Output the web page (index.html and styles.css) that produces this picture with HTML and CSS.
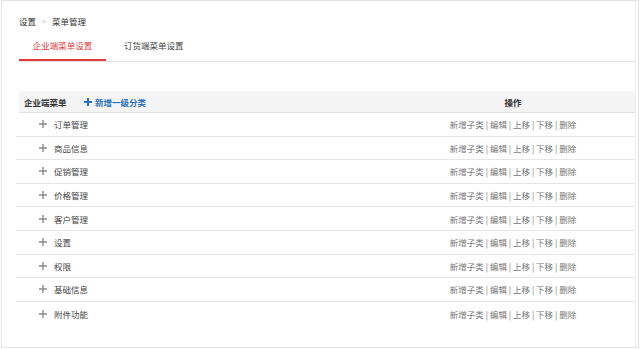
FILE: index.html
```html
<!DOCTYPE html>
<html lang="zh-CN">
<head>
<meta charset="utf-8">
<link rel="stylesheet" href="styles.css">
</head>
<body>
<div class="frame">
  <div class="inner">
    <div class="crumb"><span>设置</span><span class="sep">&gt;</span><span>菜单管理</span></div>
    <div class="tabs">
      <div class="tab active">企业端菜单设置</div>
      <div class="tab">订货端菜单设置</div>
    </div>
    <div class="table">
      <div class="thead">
        <div class="c-name"><span class="th-title">企业端菜单</span><span class="add"><svg width="8" height="8" viewBox="0 0 8 8"><path d="M4 0v8M0 4h8" stroke="#2a72bd" stroke-width="2"/></svg>新增一级分类</span></div>
        <div class="c-op">操作</div>
      </div>
      <div class="row"><div class="c-name"><svg class="plus" width="8" height="8" viewBox="0 0 8 8"><path d="M4 0v8M0 4h8" stroke="#8a8a8a" stroke-width="1.4"/></svg>订单管理</div><div class="c-op ops">新增子类 | 编辑 | 上移 | 下移 | 删除</div></div>
      <div class="row"><div class="c-name"><svg class="plus" width="8" height="8" viewBox="0 0 8 8"><path d="M4 0v8M0 4h8" stroke="#8a8a8a" stroke-width="1.4"/></svg>商品信息</div><div class="c-op ops">新增子类 | 编辑 | 上移 | 下移 | 删除</div></div>
      <div class="row"><div class="c-name"><svg class="plus" width="8" height="8" viewBox="0 0 8 8"><path d="M4 0v8M0 4h8" stroke="#8a8a8a" stroke-width="1.4"/></svg>促销管理</div><div class="c-op ops">新增子类 | 编辑 | 上移 | 下移 | 删除</div></div>
      <div class="row"><div class="c-name"><svg class="plus" width="8" height="8" viewBox="0 0 8 8"><path d="M4 0v8M0 4h8" stroke="#8a8a8a" stroke-width="1.4"/></svg>价格管理</div><div class="c-op ops">新增子类 | 编辑 | 上移 | 下移 | 删除</div></div>
      <div class="row"><div class="c-name"><svg class="plus" width="8" height="8" viewBox="0 0 8 8"><path d="M4 0v8M0 4h8" stroke="#8a8a8a" stroke-width="1.4"/></svg>客户管理</div><div class="c-op ops">新增子类 | 编辑 | 上移 | 下移 | 删除</div></div>
      <div class="row"><div class="c-name"><svg class="plus" width="8" height="8" viewBox="0 0 8 8"><path d="M4 0v8M0 4h8" stroke="#8a8a8a" stroke-width="1.4"/></svg>设置</div><div class="c-op ops">新增子类 | 编辑 | 上移 | 下移 | 删除</div></div>
      <div class="row"><div class="c-name"><svg class="plus" width="8" height="8" viewBox="0 0 8 8"><path d="M4 0v8M0 4h8" stroke="#8a8a8a" stroke-width="1.4"/></svg>权限</div><div class="c-op ops">新增子类 | 编辑 | 上移 | 下移 | 删除</div></div>
      <div class="row"><div class="c-name"><svg class="plus" width="8" height="8" viewBox="0 0 8 8"><path d="M4 0v8M0 4h8" stroke="#8a8a8a" stroke-width="1.4"/></svg>基础信息</div><div class="c-op ops">新增子类 | 编辑 | 上移 | 下移 | 删除</div></div>
      <div class="row last"><div class="c-name"><svg class="plus" width="8" height="8" viewBox="0 0 8 8"><path d="M4 0v8M0 4h8" stroke="#8a8a8a" stroke-width="1.4"/></svg>附件功能</div><div class="c-op ops">新增子类 | 编辑 | 上移 | 下移 | 删除</div></div>
    </div>
  </div>
</div>
</body>
</html>
```

FILE: styles.css
```css
* { box-sizing: border-box; }
html, body { margin: 0; padding: 0; background: #fff; }
body {
  font-family: "Noto Sans CJK SC", "Noto Sans", sans-serif;
  font-size: 8.5px;
  color: #333;
  width: 640px;
  height: 349px;
  overflow: hidden;
}
.frame {
  margin-left: 1px;
  width: 638px;
  height: 348px;
  border: 1px solid #e3e3e3;
}
.inner {
  width: 634px;
  height: 100%;
  border-right: 1px solid #ececec;
  padding-top: 12px;
}
.crumb {
  display: flex;
  align-items: center;
  gap: 6px;
  padding-left: 17px;
  height: 16px;
  line-height: 16px;
  color: #333;
}
.crumb .sep { color: #bbb; font-size: 7px; }
.tabs {
  display: flex;
  margin-top: 7px;
  margin-left: 17px;
  margin-right: -1px;
  border-bottom: 1px solid #e2e2e2;
}
.tab {
  height: 25px;
  line-height: 19px;
  width: 87px;
  text-align: center;
  color: #444;
  white-space: nowrap;
}
.tab + .tab { margin-left: 18px; width: auto; text-align: left; }
.tab.active {
  color: #e03a3a;
  border-bottom: 2px solid #e03a3a;
  margin-bottom: -1px;
}
.table { margin-top: 29px; margin-left: 14px; }
.thead {
  display: flex;
  align-items: center;
  height: 22px;
  margin-left: 3px;
  background: #f4f4f4;
  border-bottom: 1px solid #e0e0e0;
  font-weight: 600;
  color: #333;
}
.thead .c-name { padding-left: 5px; display: flex; align-items: center; }
.th-title { width: 60px; }
.add {
  display: inline-flex;
  align-items: center;
  gap: 3px;
  color: #2a72bd;
}
.c-name { flex: 1; }
.c-op { width: 244px; text-align: center; }
.thead .c-op { margin-left: 3px; }
.row {
  display: flex;
  align-items: center;
  height: 23.6px;
  border-bottom: 1px solid #e6e6e6;
}
.row.last { border-bottom: none; }
.row .c-name { padding-left: 23px; display: flex; align-items: center; color: #444; }
.plus { margin-right: 7px; }
.ops { color: #777; }
```
